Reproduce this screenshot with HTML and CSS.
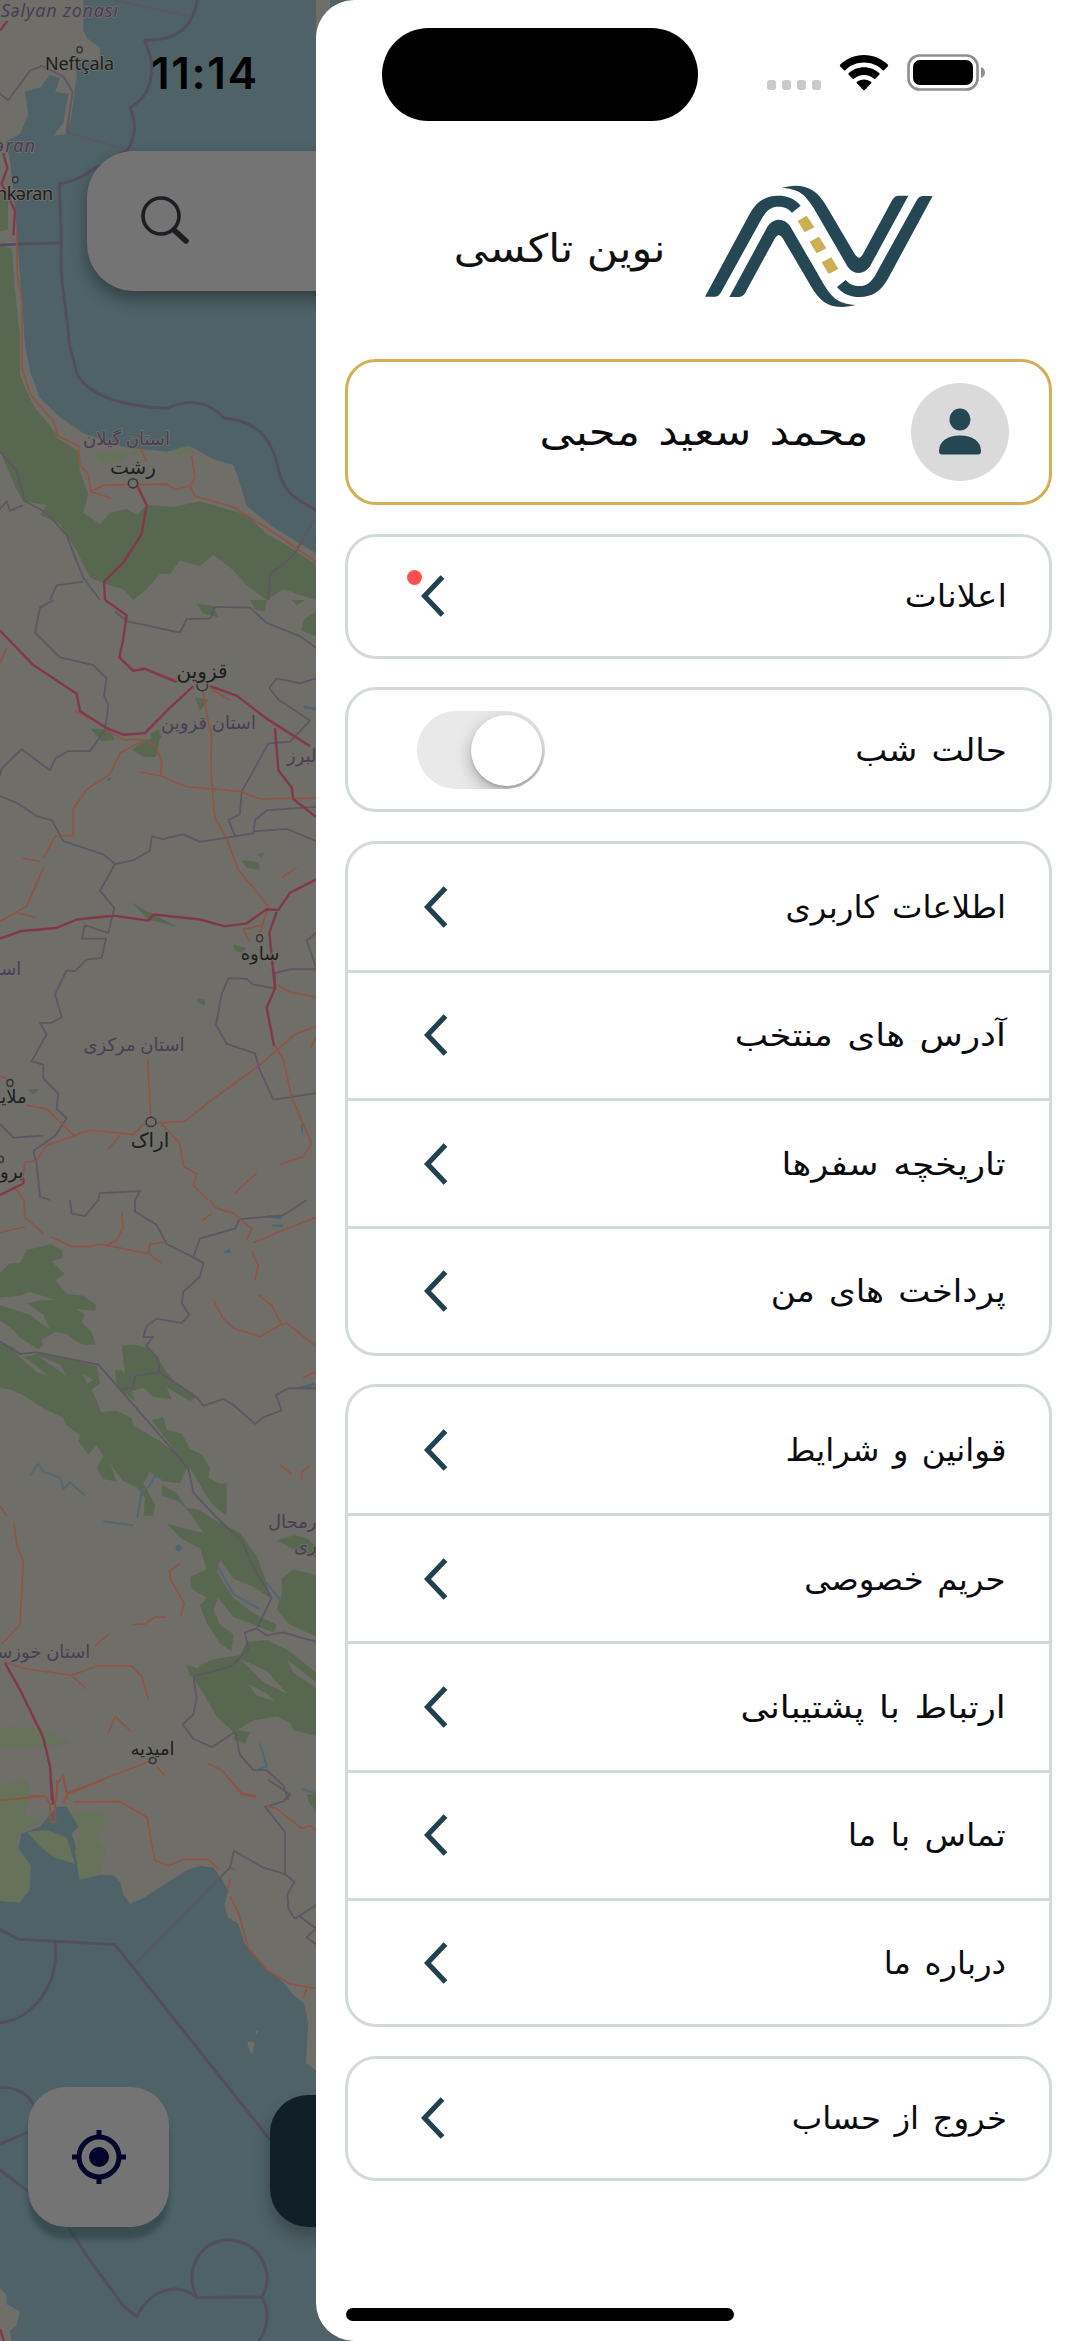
FILE: index.html
```html
<!DOCTYPE html>
<html lang="fa">
<head>
<meta charset="utf-8">
<title>نوین تاکسی</title>
<link rel="stylesheet" href="styles.css">
</head>
<body>
<div class="screen">
  <div class="backdrop">
    <svg class="map" viewBox="0 0 330 2341" width="330" height="2341" aria-hidden="true">
      <rect class="land" width="330" height="2341"/>
      <!-- Caspian coast and Gilan -->
      <g class="tile" transform="scale(.33333 .38265)">
        <path class="wood" d="M0 640L35 650 45 760 60 880 60 980 100 1060 165 1130 190 1150 235 1180 240 1230 265 1290 250 1340 300 1370 330 1340 380 1330 410 1345 440 1320 520 1325 600 1310 680 1330 740 1345 800 1395 870 1430 948 1475V1568L900 1555 850 1540 800 1568 740 1530 700 1490 640 1450 600 1480 540 1465 510 1500 480 1500 440 1540 400 1568 370 1540 330 1530 270 1510 230 1440 180 1370 120 1345 140 1320 70 1310 50 1280 30 1240 0 1180Z"/>
        <path class="land" d="M165 1140L235 1150 300 1190 390 1210 360 1240 420 1290 400 1330 330 1330 290 1310 262 1285 240 1230 235 1180Z"/>
        <path class="sea" d="M250 0H948V1445L880 1410 820 1378 740 1322 715 1250 700 1215 640 1200 575 1168 500 1180 380 1170 250 1132 180 1090 120 1040 90 970 75 900 65 780 55 660 45 540 30 420 18 370 60 350 85 300 75 240 122 228 150 195 180 205 165 240 205 245 190 320 160 355 200 350 215 300 230 200 228 150 300 165 300 125 262 100 250 80Z"/>
        <path class="meadow" d="M270 1190l60-6 60-4-20 20-50 14zM520 1175l50-10 15 18-50 8zM390 1180l40 0-10 12z"/>
        <path class="wood" d="M0 500l24 20 0 80-24 5z"/>
        <path class="border thick" d="M592 0C580 70 530 108 434 105L452 150C462 220 440 255 390 282 412 320 405 360 382 392L300 436C275 432 270 466 178 480L184 640C176 720 200 800 208 900L232 980C260 1020 330 1060 500 1067 560 1046 620 1042 672 1093 770 1098 815 1150 832 1215 850 1290 880 1300 948 1333M0 640L184 634"/>
        <path class="border" d="M340 0L565 42M0 245L25 262 90 185 125 172 190 200 218 240 200 345 382 392M0 1180L50 1230 75 1310 140 1340 200 1400 250 1510 300 1568M0 1330L20 1310 30 1335 70 1320M948 1350L885 1445 850 1475 810 1500 805 1568M150 1568L170 1530 250 1520"/>
        <path class="minor" d="M50 600L52 720 66 790 66 960 90 1030 160 1100 175 1140 235 1165 240 1215 265 1240 272 1285 335 1302M272 1285L310 1268 500 1265 525 1280 570 1270 585 1297 700 1325 810 1385 948 1468M575 1190L585 1250 570 1270M420 1170L440 1205"/>
        <path class="major" d="M0 80L22 55M10 400L22 440 5 480 45 550 40 615M412 1270L440 1320 425 1395 370 1470 312 1520 315 1568"/>
        <circle class="town" cx="239" cy="130" r="8"/><circle class="town" cx="46" cy="470" r="8"/><ellipse class="town" cx="399" cy="1263" rx="14" ry="12"/>
      </g>
      <!-- Qazvin, Saveh, Arak -->
      <g class="tile" transform="translate(0 600) scale(.33333 .38265)">
        <path class="wood" d="M395 390l60-30 25 0-12 50-40 0zM450 350l25-12 10 20-25 15zM270 335l60 5 15 25-40 5zM750 0h50l-5 30-30-5zM948 30v65l-45-15 10-30zM590 10l50 5 15 30-45-10zM875 0h40l-25 15zM585 255l40 5-25 30zM725 680l50 5 5 20-40-5zM770 665l20-5-5 15zM590 1040l25 5 0 15-20-8zM700 900l40 10-15 12-20-6zM395 790l40 20 100 45-90-20zM80 1280l40-3-20 14z"/>
        <path class="water" d="M910 275l38 8v5l-38-5zM902 1370l6 0 0 30-4-5zM320 468l15-4-8 10z"/>
        <path class="border" d="M160 0L120 20 105 85 180 150 280 170 320 205 312 250 325 275 315 340 270 395 205 395 165 415 150 445 65 390 5 440 0 460M345 30L380 55 540 85 560 50 630 48 645 18 750 20 800 60 900 95 948 125M948 205L900 218 830 205 808 230 835 260 930 315 870 370 805 375 745 470 725 500 720 560 685 575 705 615M0 512L50 530 110 565 155 575 190 630 310 665 345 690 400 680 450 655 455 618 490 625 550 612 600 632 760 610 765 575 800 550 948 540M760 605L860 598 948 630M345 690L300 760 343 805 325 870 255 850 245 885 318 885 305 935 260 940 225 970 200 968 165 1030 185 1090 155 1105 120 1105 140 1135 95 1205 130 1215 130 1250 175 1290 170 1330 200 1355 165 1400 100 1440 110 1475 120 1560 150 1568M948 965L870 965 825 975 825 1015 760 1005 740 990 685 988 665 1030 648 1110 680 1160 765 1185 780 1230 820 1305 870 1300 948 1288M948 870L920 890 948 960M0 1370L40 1405 130 1400M295 1568L300 1550 420 1545 405 1568"/>
        <path class="minor" d="M435 365L360 400 330 455 260 495 220 545 220 615 165 618 130 675M130 700L80 800 0 840M55 818L108 830M68 675L120 682M435 365L465 380 485 420 483 460 420 450M483 460L560 488 720 500 780 520 948 518M607 230L625 320 635 350 632 440 645 570 680 625 715 705 805 800 780 870M420 175L530 210M225 290L265 310M0 165L20 125M315 335L370 365 425 365M630 230L690 262M443 1200L452 1350M222 1400L270 1385 400 1397 430 1370 555 1362 630 1310 780 1215 885 1135 948 1115M80 1320L140 1330 222 1400 140 1425 110 1465 75 1470 68 1510M325 1435L360 1400M485 1370L540 1420 550 1480 590 1500 580 1530 625 1568M825 1165L850 1200 875 1300 920 1390 935 1420 910 1455 840 1475M770 1497L705 1550M830 1005L870 1025 948 1038M845 725L890 700M788 850L730 860 750 895M0 1245L20 1250M948 1145L932 1170M45 1535L70 1568"/>
        <path class="major" d="M315 0L380 40 370 100 358 150 400 185 435 180 530 215M0 80L100 170 230 245 240 290 320 335 370 352 435 348 500 290 580 225M630 225L710 250 800 310 930 382M825 335L835 445 875 490 880 520 948 567M0 885L65 865 170 857 230 835 340 825 445 838 460 822 600 835 675 853 740 845 800 808 835 810 870 765 948 730M830 815L808 870 825 1015 800 1065 822 1165 M0 1555L70 1525 70 1510"/>
        <ellipse class="town" cx="607" cy="224" rx="16" ry="13"/><circle class="town" cx="779" cy="884" r="9"/><ellipse class="town" cx="453" cy="1364" rx="15" ry="12"/><circle class="town" cx="30" cy="1262" r="9"/><circle class="town" cx="2" cy="1462" r="8"/>
      </g>
      <!-- Zagros forests -->
      <g class="tile" transform="translate(0 1200) scale(.33333 .38265)">
        <path class="wood" d="M0 190L30 165 60 165 80 130 110 125 150 115 185 130 190 150 155 160 195 195 165 210 200 245 250 250 290 275 285 290 230 285 255 300 245 320 275 345 288 378 250 378 230 370 200 350 165 345 125 365 130 380 115 390 60 360 40 340 0 315Z"/>
        <path class="wood" d="M0 375L40 385 70 410 130 400 210 415 290 435 300 480 275 495 305 555 350 550 395 570 400 590 430 605 480 630 540 670 565 695 550 720 540 740 490 735 450 710 430 740 465 795 460 825 430 825 435 780 410 750 370 735 330 690 350 735 310 730 290 700 310 670 290 640 265 665 235 630 240 615 195 585 190 570 130 545 70 510 30 495 0 490Z"/>
        <path class="wood" d="M365 380L400 378 440 385 470 410 500 450 540 490 590 515 570 525 500 490 515 520 460 515 430 490 395 500 405 525 350 490 345 445 365 445 375 455Z"/>
        <path class="wood" d="M455 575L490 568 500 600 545 610 570 650 605 665 630 700 625 725 655 740 680 740 680 825 640 800 610 760 570 700 520 650Z"/>
        <path class="wood" d="M485 745L530 765 560 805 600 810 640 835 720 870 770 930 800 1000 810 1040 760 1010 700 990 660 940 650 970 700 1040 760 1080 830 1110 820 1130 760 1110 700 1090 655 1040 640 1070 660 1110 700 1135 695 1180 660 1160 620 1105 600 1060 620 1040 575 1015 570 985 620 965 600 910 545 885 500 845 560 860 610 870 580 830 540 790 485 772Z"/>
        <path class="wood" d="M845 990L880 965 948 980V1140L870 1110 830 1070 845 1030ZM830 890l50-14 40 8 28 20v30l-40-14-30-8zM560 1215l40 10 0 20-30 0zM750 1390L710 1385 700 1410 735 1420Z"/>
        <path class="wood" d="M740 1155L800 1150 870 1180 948 1235V1400L880 1385 870 1365 830 1350 760 1360 700 1390 650 1350 610 1290 580 1250 600 1215 640 1200 720 1190Z"/>
        <path class="land" d="M0 255L60 250 90 240 165 262 120 262 80 270 130 300 150 340 90 300 0 275ZM40 395L90 420 145 460 110 450ZM110 405L180 430 200 460 150 430ZM250 455L280 470 260 480ZM720 1200L800 1230 860 1290 790 1260ZM745 1265L800 1290 825 1310 770 1295ZM860 1200L948 1260V1275L880 1235Z"/>
        <path class="meadow" d="M0 1385l40-10 90 10 85 35-80 10-135 0zM0 1540l80-20 10 20-20 28H0z"/>
        <path class="water" d="M800 40l45 2v8l-45-4zM815 64l35 0 0 7-35-2zM890 490l50-12 8 6-50 10zM670 135l20-8 2 12zM527 905l10-6 8 10-8 10-10-5z"/>
        <path class="stream" d="M90 720L115 690 130 710 180 725 190 755 210 738 255 772M412 830L425 760 450 745 465 720 490 725M655 960L700 1030 780 1070M800 1000L840 1045M310 840L400 850M780 1420L800 1480 770 1490M905 1540L948 1550"/>
        <path class="border" d="M210 0L215 35 255 42 295 0M405 0L405 30 470 65 500 115 580 150 610 165 600 200 550 240 545 270 568 300 545 322 470 310 440 330 430 358 460 358 438 380 475 415 478 450 590 515 610 538 670 520 700 535 765 585 790 568 845 550 828 510 865 492 948 492M580 150L600 100 705 75 720 50 850 40 920 0M0 370L60 402 110 398 190 412 295 430 360 495 400 490 405 460 478 450M360 495L440 575 510 645 565 700 580 765 650 830 725 890 760 960 815 1040 770 1120 735 1130 745 1175 690 1220 580 1245 590 1300 580 1345 548 1370 580 1408 635 1430 705 1390 720 1450 760 1490 800 1490 850 1530 865 1568M770 1120L800 1138 850 1130 948 1155"/>
        <path class="minor" d="M72 0L75 45 130 88M0 85L75 70M155 97L215 122 265 122 300 115 445 140 485 165M365 30L370 70 350 105 320 120M445 140L450 115 495 110M630 0L645 20 700 35 755 75 740 105M605 55L635 35M760 112L860 75 948 45M755 135L775 170 765 210M640 262L670 310 700 335 780 357 845 325M775 248L815 275 845 325 860 322 948 382M910 465L948 448M840 690L875 718M905 730L905 710 930 695M0 800L20 825M42 845L50 900 70 945 60 1110 5 1160 M325 1135L285 1165M15 1208L75 1225 215 1242 290 1218 395 1218 425 1245 445 1305M215 1242L258 1277M325 1393L345 1350 393 1388M540 950L508 970 512 990 552 1055 542 1088M397 1110L435 1108 465 1090 500 1090M625 1473L665 1490 725 1550 768 1558M448 1468L200 1550M470 1480L495 1505M168 1568L172 1525 190 1503 203 1568M0 1560L130 1558"/>
        <path class="major" d="M15 1210L60 1280 130 1405 150 1480 156 1568"/>
        <ellipse class="town" cx="458" cy="1465" rx="10" ry="8"/>
      </g>
      <!-- Persian Gulf -->
      <g class="tile" transform="translate(0 1780) scale(.33333 .35778)">
        <path class="sea" d="M0 338L60 343 90 300 92 240 55 190 65 150 120 130 170 75 200 75 235 130 215 150 235 210 240 278 300 265 340 266 360 285 370 320 390 346 430 330 480 300 560 252 600 240 640 245 665 275 685 310 673 350 685 385 715 402 735 460 800 530 850 565 880 600 912 625 925 680 918 790 948 812H990V1568H0Z"/>
        <path class="meadow" d="M0 15L80 0 85 50 75 100 135 115 70 140 50 175 60 210 90 240 88 310 55 342 0 338ZM215 85L310 90 315 130 285 160 318 190 300 265 238 278 225 200 245 150ZM82 145L140 140 200 160 225 235 160 215 125 190Z"/>
        <path class="wood" d="M920 40l28 0v45l-20-20zM685 240l30 15-30-10z"/>
        <path class="land" d="M742 730l22 3-5 32-10-5zM766 700l8 0-4 12zM0 1420l20 20 0 25 40 20-10 40-20 15 5 30-35 0z"/>
        <path class="border thick" d="M0 418L55 445 345 460 810 1005M165 455C180 570 100 670 0 678M0 860C60 858 90 885 102 912M0 1017L84 985M0 1090L84 1150M205 1250L260 1330 370 1470 410 1500C450 1425 530 1400 590 1446L785 1445M590 1446C550 1370 600 1285 687 1285 790 1290 825 1390 785 1445 810 1480 805 1540 775 1568"/>
        <path class="border" d="M405 515L690 245 702 198 790 245 855 263 855 145 795 75 850 60 870 40 805 0M855 263L883 285 862 320 865 360 885 388 948 350M895 378L948 415 920 440 948 460"/>
        <path class="minor" d="M0 57L135 45 150 68 165 65 172 45 170 0M150 68L152 118 167 118 165 65M190 0L202 40 310 0M202 40L190 65M220 62L360 60 442 105 455 180 465 225 505 240 550 222 625 222 657 250M692 0L725 40 768 48M690 275L685 305M690 325L715 370 745 470 800 530 870 570 948 583M920 583L910 610M800 72L830 80 905 135 930 128 948 140"/>
        <path class="major" d="M153 0L160 68M0 1535L12 1568"/>
      </g>
      <g class="labels">
        <text class="region italic" x="1" y="17" textLength="117">Səlyan zonası</text>
        <text class="city" x="45" y="70" textLength="69">Neftçala</text>
        <text class="region italic" x="-5" y="152" textLength="40">əran</text>
        <text class="city" x="-4" y="200" textLength="57">nkəran</text>
        <text class="region" x="126.500" y="445" text-anchor="middle">استان گیلان</text>
        <text class="city big" x="133" y="474" text-anchor="middle">رشت</text>
        <text class="city big" x="202" y="678" text-anchor="middle">قزوین</text>
        <text class="region" x="208.500" y="729" text-anchor="middle">استان قزوین</text>
        <text class="region" x="287" y="762">البرز</text>
        <text class="region" x="-4" y="975">اسـ</text>
        <text class="city" x="260" y="960" text-anchor="middle">ساوه</text>
        <text class="region" x="134" y="1051" text-anchor="middle">استان مرکزی</text>
        <text class="city" x="-4" y="1103">ملایـ</text>
        <text class="city big" x="150" y="1147" text-anchor="middle">اراک</text>
        <text class="city" x="0" y="1178">برو</text>
        <text class="region" x="268" y="1528">رمحال</text>
        <text class="region" x="294" y="1552">ری</text>
        <text class="region" x="-8" y="1658">استان خوزسـ</text>
        <text class="city" x="152.500" y="1755" text-anchor="middle">امیدیه</text>
      </g>
    </svg>
    <div class="search">
      <svg width="52" height="48" viewBox="0 0 52 48"><circle cx="22" cy="20" r="18"/><path class="handle" d="M35 34L47 45"/></svg>
    </div>
    <div class="locate">
      <svg width="56" height="56" viewBox="0 0 56 56"><circle class="ring" cx="28" cy="28" r="20"/><circle class="dot" cx="28" cy="28" r="10"/><path class="ring" d="M28 1V8M28 48V55M1 28H8M48 28H55"/></svg>
    </div>
    <div class="action"></div>
    <div class="clock">11:14</div>
  </div>

  <aside class="drawer">
    <div class="status">
      <div class="island"></div>
      <div class="signal"><i></i><i></i><i></i><i></i></div>
      <svg class="wifi" width="50" height="38" viewBox="0 0 50 38"><path d="M25 1C15.500 1 7.500 4.600 1 10.800Q.5 11.500 1 12.200L5 16.200Q5.700 16.700 6.400 16.200C11.500 11.300 18 8.600 25 8.600S38.500 11.300 43.600 16.200Q44.300 16.700 45 16.200L49 12.200Q49.500 11.500 49 10.800C42.500 4.600 34.500 1 25 1Z"/><path d="M25 13.300C19 13.300 13.600 15.600 9.500 19.300Q9 20 9.500 20.600L13.700 24.800Q14.400 25.200 15 24.700C17.700 22.300 21.200 20.900 25 20.900S32.300 22.300 35 24.700Q35.600 25.200 36.300 24.800L40.500 20.600Q41 20 40.500 19.300C36.400 15.600 31 13.300 25 13.300Z"/><path d="M25 25.500C22.200 25.500 19.700 26.400 17.800 28Q17.300 28.700 17.800 29.300L24.400 36Q25 36.500 25.600 36L32.200 29.300Q32.700 28.700 32.200 28C30.300 26.400 27.800 25.500 25 25.500Z"/></svg>
      <svg class="battery" width="78" height="38" viewBox="0 0 78 38"><rect class="shell" x="1.500" y="1.500" width="69" height="34" rx="11"/><rect x="6" y="6" width="60" height="25" rx="7"/><path class="nub" d="M74 13Q78 14.500 78 18.500T74 24Z"/></svg>
    </div>

    <header class="brand">
      <h1 dir="rtl">نوین تاکسی</h1>
      <svg width="260" height="150" viewBox="0 0 780 450">
        <defs>
          <g id="lane">
            <path d="M45 380H76Q86 379 92 369L213 150C230 118 246 110 264 110 282 110 293 114 306 128L332 107C312 84 292 77 264 77 225 77 200 95 180 130Z"/>
            <path d="M118 381H148Q159 380 165 370L254 206Q266 184 279 206L362 347C388 393 415 411 458 411Q480 410 498 405C450 400 432 392 402 344L300 168Q286 149 266 149 247 149 233 169Z"/>
          </g>
        </defs>
        <g class="road"><use href="#lane"/><use href="#lane" transform="rotate(180 386.500 229)"/></g>
        <path class="dash" d="M323 153L350 137 373 172 344 187ZM359 215L387 200 409 235 380 250ZM395 277L424 262 445 297 416 312Z"/>
      </svg>
    </header>

    <main class="menu" dir="rtl">
      <section class="card profile">
        <span class="avatar"><svg width="44" height="48" viewBox="0 0 44 48"><ellipse cx="22" cy="11.500" rx="10.500" ry="11"/><path d="M1 43C1 33 10 27.500 22 27.500S43 33 43 43Q43 46.500 40 46.500H4Q1 46.500 1 43Z"/></svg></span>
        <span class="name">محمد سعید محبی</span>
      </section>
      <section class="card single">
        <span class="label mid">اعلانات</span>
        <span class="arrow"><svg class="chevron" viewBox="0 0 24 42"><path d="M21.500 2L3.500 21 21.500 40"/></svg><i class="unread"></i></span>
      </section>
      <section class="card single">
        <span class="label mid">حالت شب</span>
        <span class="toggle"><i></i></span>
      </section>
      <section class="card list">
        <div class="row"><span class="label">اطلاعات کاربری</span><svg class="chevron" viewBox="0 0 24 42"><path d="M21.500 2L3.500 21 21.500 40"/></svg></div>
        <div class="row"><span class="label wide">آدرس های منتخب</span><svg class="chevron" viewBox="0 0 24 42"><path d="M21.500 2L3.500 21 21.500 40"/></svg></div>
        <div class="row"><span class="label wide">تاریخچه سفرها</span><svg class="chevron" viewBox="0 0 24 42"><path d="M21.500 2L3.500 21 21.500 40"/></svg></div>
        <div class="row"><span class="label mid">پرداخت های من</span><svg class="chevron" viewBox="0 0 24 42"><path d="M21.500 2L3.500 21 21.500 40"/></svg></div>
      </section>
      <section class="card list">
        <div class="row"><span class="label">قوانین و شرایط</span><svg class="chevron" viewBox="0 0 24 42"><path d="M21.500 2L3.500 21 21.500 40"/></svg></div>
        <div class="row"><span class="label">حریم خصوصی</span><svg class="chevron" viewBox="0 0 24 42"><path d="M21.500 2L3.500 21 21.500 40"/></svg></div>
        <div class="row"><span class="label wide">ارتباط با پشتیبانی</span><svg class="chevron" viewBox="0 0 24 42"><path d="M21.500 2L3.500 21 21.500 40"/></svg></div>
        <div class="row"><span class="label mid">تماس با ما</span><svg class="chevron" viewBox="0 0 24 42"><path d="M21.500 2L3.500 21 21.500 40"/></svg></div>
        <div class="row"><span class="label">درباره ما</span><svg class="chevron" viewBox="0 0 24 42"><path d="M21.500 2L3.500 21 21.500 40"/></svg></div>
      </section>
      <section class="card single">
        <span class="label">خروج از حساب</span>
        <span class="arrow"><svg class="chevron" viewBox="0 0 24 42"><path d="M21.500 2L3.500 21 21.500 40"/></svg></span>
      </section>
    </main>
    <div class="home"></div>
  </aside>
</div>
</body>
</html>
```
FILE: styles.css
```css
* { box-sizing: border-box; }
body { margin: 0; background: #4e6268; font-family: "DejaVu Sans", sans-serif; }
.screen { position: relative; display: flex; justify-content: flex-end; width: 1080px; height: 2341px; overflow: hidden; }
.backdrop { position: absolute; inset: 0; overflow: hidden; }
.map { display: block; }

.land { fill: #706e69; }
.sea { fill: #4e6268; }
.wood { fill: #586850; }
.meadow { fill: #66735a; }
.water { fill: #4a6675; }
.tile path, .tile circle, .tile ellipse { vector-effect: non-scaling-stroke; }
.border, .minor, .major, .stream { fill: none; stroke-linejoin: round; }
.border { stroke: #5d5663; stroke-width: 1.8; }
.border.thick { stroke: #534d5c; stroke-width: 2.8; }
.minor { stroke: #8f5443; stroke-width: 1.7; }
.major { stroke: #82384a; stroke-width: 2.4; }
.stream { stroke: #4f6875; stroke-width: 2; }
.town { fill: #706e69; stroke: #35373a; stroke-width: 1.5; }
.labels { font-size: 18px; paint-order: stroke; stroke: #706e69; stroke-width: 2px; stroke-linejoin: round; }
.region { fill: #4a3d55; font-family: "Noto Sans", "DejaVu Sans", sans-serif; }
.city { fill: #1c1e20; font-family: "Noto Sans", "DejaVu Sans", sans-serif; }
.labels .italic { font-style: italic; }
.labels .big { font-size: 20px; }

.search { position: absolute; left: 87px; top: 151px; width: 900px; height: 140px; padding: 45px 52px; border-radius: 47px; background: #747474; box-shadow: 0 8px 16px rgba(0, 0, 0, .35); }
.search svg { display: block; fill: none; stroke: #1d1e22; stroke-width: 3.6; }
.search .handle { stroke-width: 5.5; stroke-linecap: round; }
.locate { position: absolute; left: 28px; top: 2087px; width: 141px; height: 140px; display: grid; place-items: center; border-radius: 38px; background: #747474; box-shadow: 0 12px 5px rgba(30, 50, 55, .45); }
.locate .ring { fill: none; stroke: #04042c; stroke-width: 5; }
.locate .dot { fill: #04042c; }
.action { position: absolute; left: 270px; top: 2095px; width: 400px; height: 132px; border-radius: 38px; background: #112027; box-shadow: 0 10px 16px rgba(0, 0, 0, .25); }
.clock { position: absolute; left: 151px; top: 46px; font: 600 44px/54px Inter, sans-serif; letter-spacing: 1.7px; color: #000; }

.drawer { position: relative; display: flex; flex-direction: column; width: 764px; height: 2341px; padding-right: 28px; padding-left: 29px; border-radius: 38px 0 0 38px; background: #fff; }
.status { display: flex; align-items: flex-start; height: 170px; padding: 28px 0 0 37px; }
.island { width: 316px; height: 93px; border-radius: 47px; background: #000; }
.signal { display: flex; gap: 6px; margin: 52px 0 0 69px; }
.signal i { width: 9px; height: 10px; border-radius: 3px; background: #c9c9c9; }
.wifi { margin: 26px 0 0 18px; }
.battery { margin: 26px 0 0 18px; }
.battery .shell { fill: none; stroke: #8f8f8f; stroke-width: 2.6; }
.battery .nub { fill: #8f8f8f; }

.brand { display: flex; direction: rtl; justify-content: flex-start; align-items: center; height: 189px; padding-right: 102px; }
.brand svg { flex: none; order: -1; align-self: flex-start; }
.road { fill: #254653; }
.dash { fill: #cfae53; }
.brand h1 { margin: -32px 24px 0 0; font-size: 39px; font-weight: 400; line-height: 60px; white-space: nowrap; color: #111; transform: scaleX(1.1); transform-origin: right; }

.menu { display: flex; flex-direction: column; gap: 28.5px; font-size: 31px; line-height: 48px; color: #0b0b0f; }
.card { display: flex; align-items: center; justify-content: space-between; border: 3px solid #d3dadd; border-radius: 31px; white-space: nowrap; }
.profile { height: 146px; justify-content: flex-start; gap: 42px; padding-right: 40px; border-color: #d3b057; font-size: 38px; }
.avatar { display: grid; place-items: center; width: 98px; height: 98px; border-radius: 50%; background: #dadada; }
.avatar svg { fill: #254653; }
.name { word-spacing: 4px; transform: scaleX(1.14); transform-origin: right; }
.label { word-spacing: 3px; transform: scaleX(1.045); transform-origin: right; }
.label.mid { transform: scaleX(1.1); }
.label.wide { transform: scaleX(1.145); }
.single { height: 125.2px; padding: 0 42px 0 69px; }
.arrow { position: relative; display: flex; padding-left: 4px; }
.chevron { display: block; width: 24px; height: 42px; fill: none; stroke: #204150; stroke-width: 5.2; }
.unread { position: absolute; left: -10px; top: -5px; width: 15px; height: 15px; border-radius: 50%; background: #ff4f4f; }
.toggle { display: flex; justify-content: flex-start; width: 128px; height: 78px; padding: 4px 3px; border-radius: 39px; background: #e9e9e9; overflow: hidden; }
.toggle i { width: 71px; height: 71px; border-radius: 50%; background: #fff; box-shadow: 0 6px 16px rgba(0, 0, 0, .28), 0 2px 3px rgba(0, 0, 0, .12); }
.list { flex-direction: column; align-items: stretch; }
.row { display: flex; align-items: center; justify-content: space-between; height: 128.2px; padding: 0 43px 0 76px; }
.row + .row { border-top: 3px solid #d3dadd; }
.row:first-child { height: 126px; }
.row:last-child { height: 126.5px; }
.home { position: absolute; left: 30px; bottom: 20px; width: 388px; height: 13px; border-radius: 7px; background: #000; }
```
